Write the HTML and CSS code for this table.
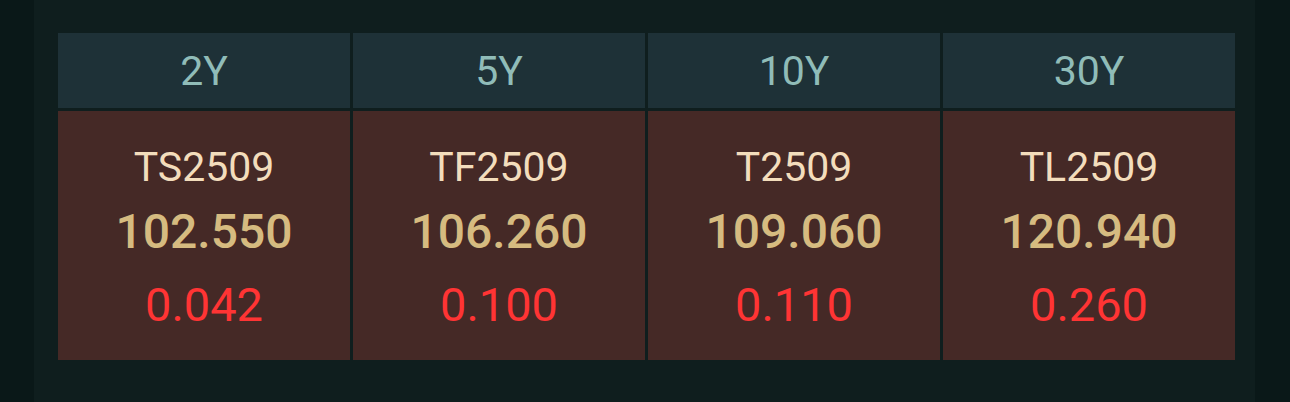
FILE: index.html
```html
<!DOCTYPE html>
<html>
<head>
<meta charset="utf-8">
<link rel="stylesheet" href="styles.css">
</head>
<body>
<div class="page">
  <div class="panel">
    <div class="grid">
      <div class="head">2Y</div>
      <div class="head">5Y</div>
      <div class="head">10Y</div>
      <div class="head">30Y</div>
      <div class="cell"><div class="code">TS2509</div><div class="price">102.550</div><div class="chg">0.042</div></div>
      <div class="cell"><div class="code">TF2509</div><div class="price">106.260</div><div class="chg">0.100</div></div>
      <div class="cell"><div class="code">T2509</div><div class="price">109.060</div><div class="chg">0.110</div></div>
      <div class="cell"><div class="code">TL2509</div><div class="price">120.940</div><div class="chg">0.260</div></div>
    </div>
  </div>
</div>
</body>
</html>
```
FILE: styles.css
```css
html, body {
  margin: 0;
  padding: 0;
  background: #0a1818;
  font-family: Roboto, "Noto Sans", sans-serif;
}
.page {
  width: 1290px;
  height: 402px;
  display: flex;
}
.panel {
  margin-left: 34px;
  width: 1221px;
  height: 402px;
  background: #0f1e1e;
  box-sizing: border-box;
  padding: 33px 20px 0 24px;
}
.grid {
  display: grid;
  grid-template-columns: repeat(4, 292px);
  grid-template-rows: 75px 249px;
  gap: 3px 3px;
}
.head {
  background: #1e3137;
  color: #90bcb8;
  font-size: 41px;
  text-align: center;
  line-height: 73px;
  padding-top: 2px;
}
.cell {
  background: #452926;
  text-align: center;
  padding-top: 31px;
  box-sizing: border-box;
}
.code {
  color: #f3ddbc;
  font-size: 41px;
  line-height: 50px;
}
.price {
  color: #d6bb80;
  font-size: 48px;
  font-weight: 500;
  line-height: 80px;
}
.chg {
  color: #ff3434;
  font-size: 47px;
  line-height: 65px;
}
```
